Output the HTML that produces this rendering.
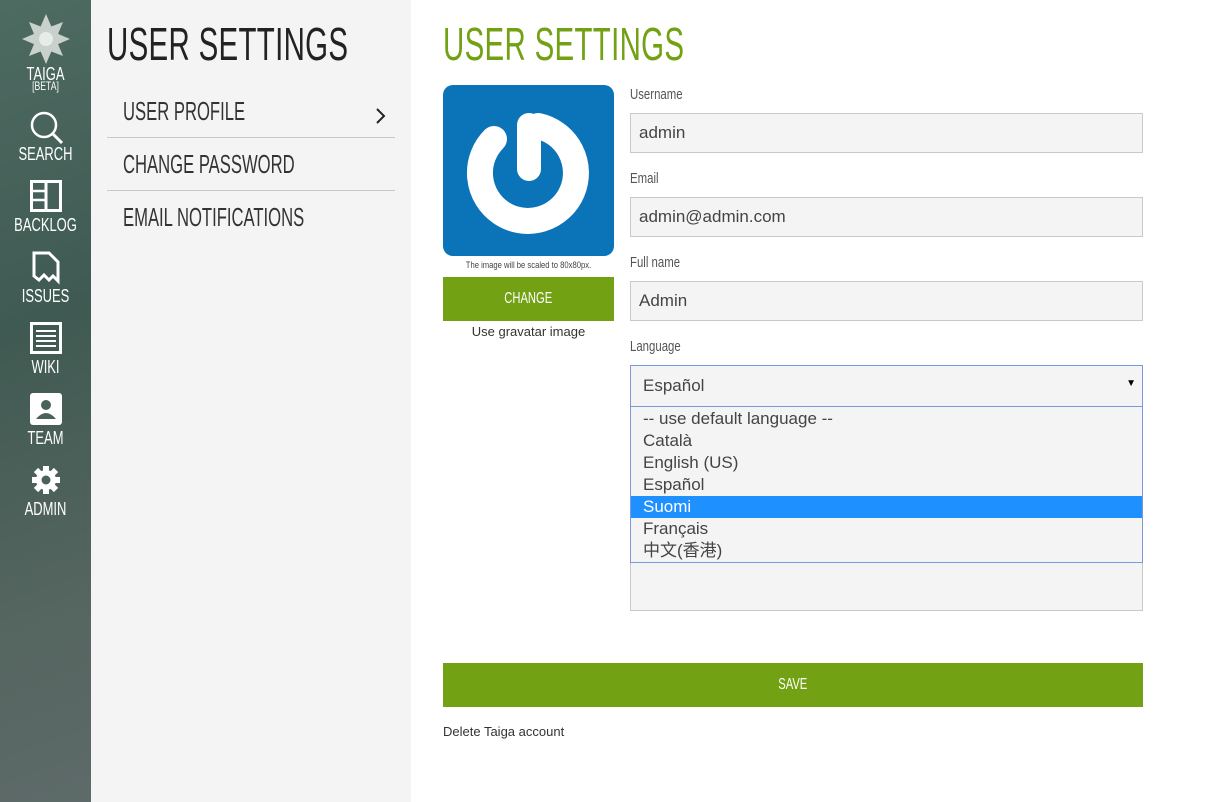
<!DOCTYPE html>
<html><head><meta charset="utf-8"><style>
*{box-sizing:border-box;margin:0;padding:0}
body{width:1219px;height:802px;overflow:hidden;background:#fff;font-family:"Liberation Sans","Noto Sans CJK SC",sans-serif;position:relative;color:#444}
.side{position:absolute;left:0;top:0;width:91px;height:802px;background:linear-gradient(160deg,#4e6b62 0%,#3f5a52 40%,#55655f 75%,#5d6a69 100%)}
.it{position:absolute;left:0;width:91px;text-align:center;color:#fff;font-size:18px;transform:scaleX(.72);white-space:nowrap}
.mid{position:absolute;left:91px;top:0;width:320px;height:802px;background:#f4f4f4}
h1{font-weight:normal;font-size:46px;position:absolute;top:17px;transform-origin:left;transform:scaleX(.64);white-space:nowrap;letter-spacing:.5px}
.menu{position:absolute;left:107px;width:288px;height:53px;border-bottom:1px solid #c8c8c8;font-size:26px;color:#333;padding:11px 16px;white-space:nowrap}
.menu span{display:inline-block;transform-origin:left;transform:scaleX(.64)}
.lbl{position:absolute;left:630px;font-size:15px;color:#555;transform-origin:left;transform:scaleX(.76);white-space:nowrap}
.inp{position:absolute;left:630px;width:513px;height:40px;background:#f4f4f4;border:1px solid #c9c9c9;font-size:17px;padding:9px 8px;color:#444}
.btn{position:absolute;background:#72a114;color:#fff;text-align:center;font-size:16px}
.btn span{display:inline-block;transform:scaleX(.7)}
.dd div{height:22px;padding-left:12px;font-size:17px;line-height:22px;color:#444}
</style></head><body>
<div class="side">
<svg style="position:absolute;left:22px;top:14px" width="48" height="50" viewBox="0 0 48 50"><g fill="#c9d1cc"><polygon points="24,0 30,14 24,25 18,14"/><polygon points="24,50 30,36 24,25 18,36"/><polygon points="0,25 14,19 24,25 14,31"/><polygon points="48,25 34,19 24,25 34,31"/><polygon points="7,8 20,13 24,25 12,20"/><polygon points="41,8 36,20 24,25 28,13"/><polygon points="7,42 12,30 24,25 20,37"/><polygon points="41,42 28,37 24,25 36,30"/></g><circle cx="24" cy="25" r="7" fill="#e8ece9"/></svg>
<div class="it" style="top:64px">TAIGA</div>
<div class="it" style="top:79px;font-size:12px">[BETA]</div>
<svg style="position:absolute;left:29px;top:110px" width="36" height="36"><circle cx="15" cy="15" r="12" fill="none" stroke="#fff" stroke-width="2.5"/><line x1="24" y1="24" x2="33" y2="33" stroke="#fff" stroke-width="3"/></svg>
<div class="it" style="top:144px">SEARCH</div>
<svg style="position:absolute;left:30px;top:180px" width="32" height="32"><rect x="1.5" y="1.5" width="29" height="29" fill="none" stroke="#fff" stroke-width="3"/><line x1="16" y1="1" x2="16" y2="31" stroke="#fff" stroke-width="3"/><line x1="1" y1="11" x2="16" y2="11" stroke="#fff" stroke-width="2.5"/><line x1="1" y1="20" x2="16" y2="20" stroke="#fff" stroke-width="2.5"/></svg>
<div class="it" style="top:215px">BACKLOG</div>
<svg style="position:absolute;left:32px;top:251px" width="28" height="34"><path d="M2 2 H17 L26 11 V30 L21 25 L17 29 L12 24 L7 29 L2 25 Z" fill="none" stroke="#fff" stroke-width="3"/></svg>
<div class="it" style="top:286px">ISSUES</div>
<svg style="position:absolute;left:30px;top:322px" width="32" height="32"><rect x="1.5" y="1.5" width="29" height="29" fill="none" stroke="#fff" stroke-width="3"/><g stroke="#fff" stroke-width="2"><line x1="6" y1="9" x2="26" y2="9"/><line x1="6" y1="14" x2="26" y2="14"/><line x1="6" y1="19" x2="26" y2="19"/><line x1="6" y1="24" x2="26" y2="24"/></g></svg>
<div class="it" style="top:357px">WIKI</div>
<svg style="position:absolute;left:30px;top:393px" width="32" height="32"><rect width="32" height="32" rx="3" fill="#fff"/><circle cx="16" cy="12" r="5" fill="#4b625b"/><path d="M6 26 Q16 14 26 26 Z" fill="#4b625b"/></svg>
<div class="it" style="top:428px">TEAM</div>
<svg style="position:absolute;left:31px;top:465px" width="30" height="30" viewBox="0 0 30 30"><g fill="#fff"><circle cx="15" cy="15" r="10"/><g stroke="#fff" stroke-width="6"><line x1="15" y1="1" x2="15" y2="29"/><line x1="1" y1="15" x2="29" y2="15"/><line x1="5" y1="5" x2="25" y2="25"/><line x1="25" y1="5" x2="5" y2="25"/></g></g><circle cx="15" cy="15" r="4.5" fill="#4b625b"/></svg>
<div class="it" style="top:499px">ADMIN</div>
</div>
<div class="mid"></div>
<h1 style="left:107px;color:#222">USER SETTINGS</h1>
<div class="menu" style="top:85px"><span>USER PROFILE</span><svg style="position:absolute;right:8px;top:22px" width="12" height="18"><path d="M2 2 L9 9 L2 16" fill="none" stroke="#222" stroke-width="2"/></svg></div>
<div class="menu" style="top:138px"><span>CHANGE PASSWORD</span></div>
<div class="menu" style="top:191px;border:none"><span>EMAIL NOTIFICATIONS</span></div>
<h1 style="left:443px;color:#72a114">USER SETTINGS</h1>
<svg style="position:absolute;left:443px;top:85px" width="171" height="171"><rect width="171" height="171" rx="10" fill="#0b73b7"/><path d="M51 54 A48 48 0 1 0 95 41" fill="none" stroke="#fff" stroke-width="26" stroke-linecap="round"/><line x1="86" y1="40" x2="86" y2="84" stroke="#fff" stroke-width="24" stroke-linecap="round"/></svg>
<div style="position:absolute;left:443px;top:260px;width:171px;text-align:center;font-size:9px;color:#444;transform:scaleX(.85)">The image will be scaled to 80x80px.</div>
<div class="btn" style="left:443px;top:277px;width:171px;height:44px;line-height:44px"><span>CHANGE</span></div>
<div style="position:absolute;left:443px;top:324px;width:171px;text-align:center;font-size:13px;color:#333">Use gravatar image</div>
<div class="lbl" style="top:86px">Username</div>
<div class="inp" style="top:113px">admin</div>
<div class="lbl" style="top:170px">Email</div>
<div class="inp" style="top:197px">admin@admin.com</div>
<div class="lbl" style="top:254px">Full name</div>
<div class="inp" style="top:281px">Admin</div>
<div class="lbl" style="top:338px">Language</div>
<div class="inp" style="top:365px;height:42px;border:1px solid #7a9ad8;padding:10px 12px">Español<span style="position:absolute;right:6px;top:12px;font-size:10px;color:#000">▼</span></div>
<div class="inp" style="top:520px;height:91px"></div>
<div class="dd" style="position:absolute;left:630px;top:407px;width:513px;height:156px;background:#f4f4f4;border:1px solid #7a9ad8;border-top:none;padding-top:1px">
<div>-- use default language --</div><div>Català</div><div>English (US)</div><div>Español</div><div style="background:#1e90ff;color:#fff">Suomi</div><div>Français</div><div>中文(香港)</div></div>
<div class="btn" style="left:443px;top:663px;width:700px;height:44px;line-height:44px"><span>SAVE</span></div>
<div style="position:absolute;left:443px;top:724px;font-size:13px;color:#333">Delete Taiga account</div>
</body></html>
